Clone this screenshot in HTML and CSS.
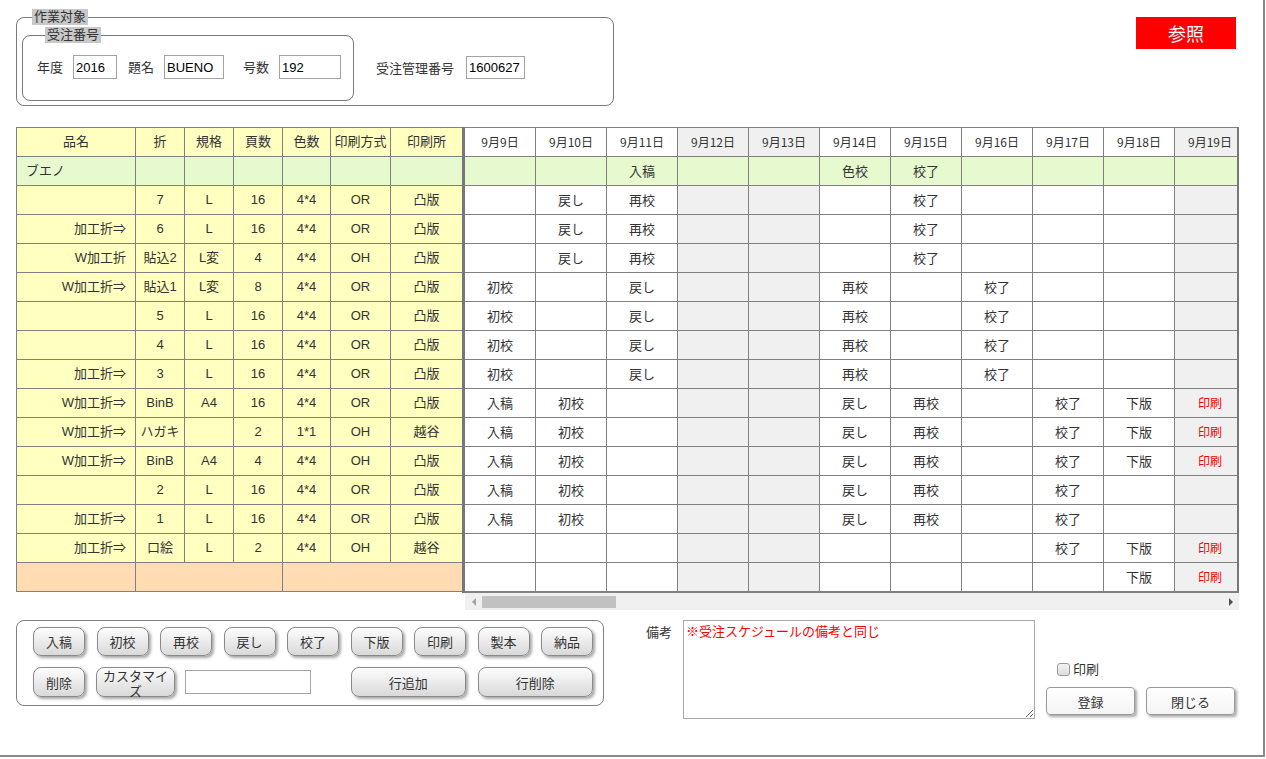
FILE: index.html
```html
<!DOCTYPE html>
<html lang="ja">
<head>
<meta charset="utf-8">
<title>作業スケジュール</title>
<link rel="stylesheet" href="styles.css">
</head>
<body>
<div class="page">
  <div class="top">
    <fieldset class="fs outer">
      <legend class="lg lg-outer">作業対象</legend>
      <fieldset class="fs inner">
        <legend class="lg lg-inner">受注番号</legend>
        <span class="lbl">年度</span><input class="tin w44" type="text" value="2016">
        <span class="lbl gap11">題名</span><input class="tin w60" type="text" value="BUENO">
        <span class="lbl gap19">号数</span><input class="tin w62" type="text" value="192">
      </fieldset>
      <div class="mgmt">
        <span class="lbl">受注管理番号</span><input class="tin w59 ml12" type="text" value="1600627">
      </div>
    </fieldset>
    <button class="ref-btn" type="button">参照</button>
  </div>

  <div class="sched-area">
    <table class="spec">
      <colgroup>
        <col class="c-name"><col class="c-fold"><col class="c-size"><col class="c-page"><col class="c-color"><col class="c-method"><col class="c-shop">
      </colgroup>
      <tr><td>品名</td><td>折</td><td>規格</td><td>頁数</td><td>色数</td><td>印刷方式</td><td>印刷所</td></tr>
      <tr class="g"><td class="l">ブエノ</td><td></td><td></td><td></td><td></td><td></td><td></td></tr>
      <tr><td class="r"></td><td>7</td><td>L</td><td>16</td><td>4*4</td><td>OR</td><td>凸版</td></tr>
      <tr><td class="r">加工折⇒</td><td>6</td><td>L</td><td>16</td><td>4*4</td><td>OR</td><td>凸版</td></tr>
      <tr><td class="r">W加工折</td><td>貼込2</td><td>L変</td><td>4</td><td>4*4</td><td>OH</td><td>凸版</td></tr>
      <tr><td class="r">W加工折⇒</td><td>貼込1</td><td>L変</td><td>8</td><td>4*4</td><td>OR</td><td>凸版</td></tr>
      <tr><td class="r"></td><td>5</td><td>L</td><td>16</td><td>4*4</td><td>OR</td><td>凸版</td></tr>
      <tr><td class="r"></td><td>4</td><td>L</td><td>16</td><td>4*4</td><td>OR</td><td>凸版</td></tr>
      <tr><td class="r">加工折⇒</td><td>3</td><td>L</td><td>16</td><td>4*4</td><td>OR</td><td>凸版</td></tr>
      <tr><td class="r">W加工折⇒</td><td>BinB</td><td>A4</td><td>16</td><td>4*4</td><td>OR</td><td>凸版</td></tr>
      <tr><td class="r">W加工折⇒</td><td>ハガキ</td><td></td><td>2</td><td>1*1</td><td>OH</td><td>越谷</td></tr>
      <tr><td class="r">W加工折⇒</td><td>BinB</td><td>A4</td><td>4</td><td>4*4</td><td>OH</td><td>凸版</td></tr>
      <tr><td class="r"></td><td>2</td><td>L</td><td>16</td><td>4*4</td><td>OR</td><td>凸版</td></tr>
      <tr><td class="r">加工折⇒</td><td>1</td><td>L</td><td>16</td><td>4*4</td><td>OR</td><td>凸版</td></tr>
      <tr><td class="r">加工折⇒</td><td>口絵</td><td>L</td><td>2</td><td>4*4</td><td>OH</td><td>越谷</td></tr>
      <tr class="o"><td></td><td colspan="3"></td><td colspan="3"></td></tr>
    </table>

    <div class="sched-col">
      <div class="view">
        <table class="sched">
          <tr class="hd"><td>9月9日</td><td>9月10日</td><td>9月11日</td><td>9月12日</td><td>9月13日</td><td>9月14日</td><td>9月15日</td><td>9月16日</td><td>9月17日</td><td>9月18日</td><td>9月19日</td></tr>
          <tr class="g"><td></td><td></td><td>入稿</td><td></td><td></td><td>色校</td><td>校了</td><td></td><td></td><td></td><td></td></tr>
          <tr><td></td><td>戻し</td><td>再校</td><td></td><td></td><td></td><td>校了</td><td></td><td></td><td></td><td></td></tr>
          <tr><td></td><td>戻し</td><td>再校</td><td></td><td></td><td></td><td>校了</td><td></td><td></td><td></td><td></td></tr>
          <tr><td></td><td>戻し</td><td>再校</td><td></td><td></td><td></td><td>校了</td><td></td><td></td><td></td><td></td></tr>
          <tr><td>初校</td><td></td><td>戻し</td><td></td><td></td><td>再校</td><td></td><td>校了</td><td></td><td></td><td></td></tr>
          <tr><td>初校</td><td></td><td>戻し</td><td></td><td></td><td>再校</td><td></td><td>校了</td><td></td><td></td><td></td></tr>
          <tr><td>初校</td><td></td><td>戻し</td><td></td><td></td><td>再校</td><td></td><td>校了</td><td></td><td></td><td></td></tr>
          <tr><td>初校</td><td></td><td>戻し</td><td></td><td></td><td>再校</td><td></td><td>校了</td><td></td><td></td><td></td></tr>
          <tr><td>入稿</td><td>初校</td><td></td><td></td><td></td><td>戻し</td><td>再校</td><td></td><td>校了</td><td>下版</td><td class="red">印刷</td></tr>
          <tr><td>入稿</td><td>初校</td><td></td><td></td><td></td><td>戻し</td><td>再校</td><td></td><td>校了</td><td>下版</td><td class="red">印刷</td></tr>
          <tr><td>入稿</td><td>初校</td><td></td><td></td><td></td><td>戻し</td><td>再校</td><td></td><td>校了</td><td>下版</td><td class="red">印刷</td></tr>
          <tr><td>入稿</td><td>初校</td><td></td><td></td><td></td><td>戻し</td><td>再校</td><td></td><td>校了</td><td></td><td></td></tr>
          <tr><td>入稿</td><td>初校</td><td></td><td></td><td></td><td>戻し</td><td>再校</td><td></td><td>校了</td><td></td><td></td></tr>
          <tr><td></td><td></td><td></td><td></td><td></td><td></td><td></td><td></td><td>校了</td><td>下版</td><td class="red">印刷</td></tr>
          <tr><td></td><td></td><td></td><td></td><td></td><td></td><td></td><td></td><td></td><td>下版</td><td class="red">印刷</td></tr>
        </table>
      </div>
      <div class="sbar">
        <div class="sb-arrow"><span class="tri-left"></span></div>
        <div class="sb-thumb"></div>
        <div class="sb-fill"></div>
        <div class="sb-arrow"><span class="tri-right"></span></div>
      </div>
    </div>
  </div>

  <div class="bottom">
    <div class="ops">
      <button class="btn" type="button">入稿</button>
      <button class="btn" type="button">初校</button>
      <button class="btn" type="button">再校</button>
      <button class="btn" type="button">戻し</button>
      <button class="btn" type="button">校了</button>
      <button class="btn" type="button">下版</button>
      <button class="btn" type="button">印刷</button>
      <button class="btn" type="button">製本</button>
      <button class="btn" type="button">納品</button>
      <div class="ops-row2">
        <button class="btn b52" type="button">削除</button>
        <button class="btn b79" type="button">カスタマイズ</button>
        <input class="tin cust" type="text" value="">
      </div>
      <button class="btn span2" type="button">行追加</button>
      <button class="btn span2b" type="button">行削除</button>
    </div>
    <span class="note-label">備考</span>
    <textarea class="note">※受注スケジュールの備考と同じ</textarea>
    <div class="actions">
      <label class="chk"><input type="checkbox">印刷</label>
      <div class="act-btns">
        <button class="btn2" type="button">登録</button>
        <button class="btn2" type="button">閉じる</button>
      </div>
    </div>
  </div>
</div>
</body>
</html>
```

FILE: styles.css
```css
* { box-sizing: border-box; }

body {
  margin: 0;
  background: #fff;
  color: #333;
  font-family: "Liberation Sans", "Noto Sans CJK JP", sans-serif;
  font-size: 13px;
}

.page {
  width: 1265px;
  height: 757px;
  border-right: 2px solid #8a8a8a;
  border-bottom: 2px solid #8a8a8a;
}

/* ---------- top ---------- */
.top {
  display: flex;
  align-items: flex-start;
  padding: 9px 27px 0 16px;
}

.fs {
  margin: 0;
  border: 1px solid #7a7a7a;
  border-radius: 8px;
  min-inline-size: 0;
}

.outer {
  width: 598px;
  padding: 0 10px 4px 5px;
  display: flex;
  align-items: flex-end;
}

.inner {
  margin: 2px 0 0 0;
  padding: 12px 12px 21px 14px;
  display: flex;
  align-items: center;
}

.lg {
  background: #c8c8c8;
  color: #333;
  font-size: 13px;
  line-height: 16px;
  padding: 0 2px;
}
.lg-outer { margin-left: 10px; }
.lg-inner { margin-left: 8px; }

.lbl {
  font-size: 13px;
  line-height: 16px;
  color: #333;
  font-family: "Noto Sans CJK JP", sans-serif;
}
.gap11 { margin-left: 11px; }
.gap19 { margin-left: 19px; }

.tin {
  height: 24px;
  margin: 0 0 0 10px;
  border: 1px solid #a3a3a3;
  padding: 0 2px;
  font-family: "Liberation Sans", sans-serif;
  font-size: 13px;
  color: #000;
  background: #fff;
}
.w44 { width: 44px; }
.w60 { width: 60px; }
.w62 { width: 62px; }
.w59 { width: 59px; height: 23px; }
.ml12 { margin-left: 12px; }

.mgmt {
  display: flex;
  align-items: center;
  margin: 0 0 22px 22px;
}

.ref-btn {
  margin: 8px 0 0 auto;
  width: 100px;
  height: 32px;
  border: 0;
  padding: 0;
  background: #ff0000;
  color: #fff;
  font-family: "Noto Sans CJK JP", sans-serif;
  font-size: 18px;
  line-height: 32px;
}

/* ---------- schedule ---------- */
.sched-area {
  display: flex;
  align-items: flex-start;
  margin-top: 21px;
  padding-left: 16px;
}

.spec, .sched {
  border-collapse: separate;
  border-spacing: 0;
  table-layout: fixed;
  border-top: 1px solid #808080;
}

.spec {
  width: 445px;
  border-left: 1px solid #808080;
}
.c-name { width: 119px; }
.c-fold, .c-size, .c-page { width: 49px; }
.c-color { width: 48px; }
.c-method { width: 60px; }
.c-shop { width: 71px; }

.spec td, .sched td {
  height: 29px;
  padding: 0;
  border-right: 1px solid #808080;
  border-bottom: 1px solid #808080;
  text-align: center;
  vertical-align: middle;
  font-size: 13px;
  line-height: 16px;
  color: #333;
  white-space: nowrap;
  overflow: hidden;
}

.spec td { background: #ffffc0; }
.spec td:last-child { border-right: 0; }
.spec tr.g td { background: #e6f9cf; }
.spec tr.o td { background: #ffdcb4; }
.spec td.l { text-align: left; padding-left: 9px; }
.spec td.r { text-align: right; padding-right: 9px; }

.sched-col {
  display: flex;
  flex-direction: column;
}

.view {
  width: 777px;
  overflow: hidden;
  border-left: 3px solid #777;
  border-right: 2px solid #777;
  border-bottom: 1px solid #808080;
}

.sched {
  width: 781px;
  font-family: "Noto Sans CJK JP", sans-serif;
}
.sched td {
  width: 71px;
  background: #fff;
  font-family: "Noto Sans CJK JP", sans-serif;
}
.sched tr.hd td { font-size: 12px; }
.sched td:nth-child(4),
.sched td:nth-child(5),
.sched td:nth-child(11) { background: #f0f0f0; }
.sched tr.g td { background: #e6f9cf; }
.sched td.red { color: #ff0000; font-size: 12px; }

.sbar {
  margin-left: 3px;
  width: 774px;
  height: 17px;
  background: #f0f0f0;
  display: flex;
  align-items: center;
}
.sb-arrow {
  width: 17px;
  height: 17px;
  display: flex;
  align-items: center;
  justify-content: center;
}
.tri-left {
  width: 0; height: 0;
  border-top: 4px solid transparent;
  border-bottom: 4px solid transparent;
  border-right: 4px solid #a3a3a3;
}
.tri-right {
  width: 0; height: 0;
  border-top: 4px solid transparent;
  border-bottom: 4px solid transparent;
  border-left: 4px solid #505050;
}
.sb-thumb {
  width: 134px;
  height: 12px;
  background: #c1c1c1;
}
.sb-fill { flex: 1; }

/* ---------- bottom ---------- */
.bottom {
  display: flex;
  align-items: flex-start;
  margin-top: 10px;
  padding-left: 16px;
}

.ops {
  width: 588px;
  height: 86px;
  border: 1px solid #808080;
  border-radius: 8px;
  padding: 6px 0 0 16px;
  display: grid;
  grid-template-columns: repeat(9, 52px);
  grid-template-rows: 29px 30px;
  column-gap: 11.5px;
  row-gap: 11px;
  align-content: start;
}

.btn {
  height: 100%;
  margin: 0;
  padding: 0 5px;
  border: 1px solid #8a8a8a;
  border-radius: 8px;
  background: linear-gradient(#fdfdfd, #d9d9d9);
  box-shadow: 2px 2px 3px rgba(0, 0, 0, 0.35);
  font-family: "Noto Sans CJK JP", sans-serif;
  font-size: 13px;
  line-height: 15px;
  color: #333;
}

.ops-row2 {
  grid-column: 1 / 6;
  display: flex;
  align-items: center;
  height: 30px;
}
.b52 { width: 52px; }
.b79 { width: 79px; margin-left: 11px; overflow: visible; }
.cust { width: 126px; height: 24px; margin-left: 10px; }
.span2 { grid-column: 6 / 8; }
.span2b { grid-column: 8 / 10; }

.note-label {
  margin: 4px 0 0 42px;
  width: 26px;
  font-family: "Noto Sans CJK JP", sans-serif;
  font-size: 13px;
  line-height: 16px;
}

.note {
  margin: 0 0 0 11px;
  width: 352px;
  height: 99px;
  border: 1px solid #a9a9a9;
  padding: 2px 2px;
  font-family: "Noto Sans CJK JP", sans-serif;
  font-size: 13px;
  line-height: 16px;
  color: #ff0000;
  resize: both;
}

.actions {
  margin-left: 11px;
  width: 189px;
  padding-top: 41px;
  display: flex;
  flex-direction: column;
}

.chk {
  display: flex;
  align-items: center;
  padding-left: 7px;
  font-family: "Noto Sans CJK JP", sans-serif;
  font-size: 13px;
  line-height: 16px;
  color: #333;
}
.chk input {
  appearance: none;
  -webkit-appearance: none;
  margin: 0 3px 0 4px;
  width: 13px;
  height: 13px;
  border: 1px solid #9a9a9a;
  border-radius: 3px;
  background: linear-gradient(#f4f4f4, #dcdcdc);
}

.act-btns {
  display: flex;
  gap: 11px;
  margin-top: 10px;
}

.btn2 {
  width: 89px;
  height: 28px;
  margin: 0;
  padding: 0;
  border: 1px solid #9a9a9a;
  border-radius: 4px;
  background: linear-gradient(#ffffff, #f4f4f4);
  box-shadow: 2px 2px 3px rgba(0, 0, 0, 0.35);
  font-family: "Noto Sans CJK JP", sans-serif;
  font-size: 13px;
  color: #333;
}
```
